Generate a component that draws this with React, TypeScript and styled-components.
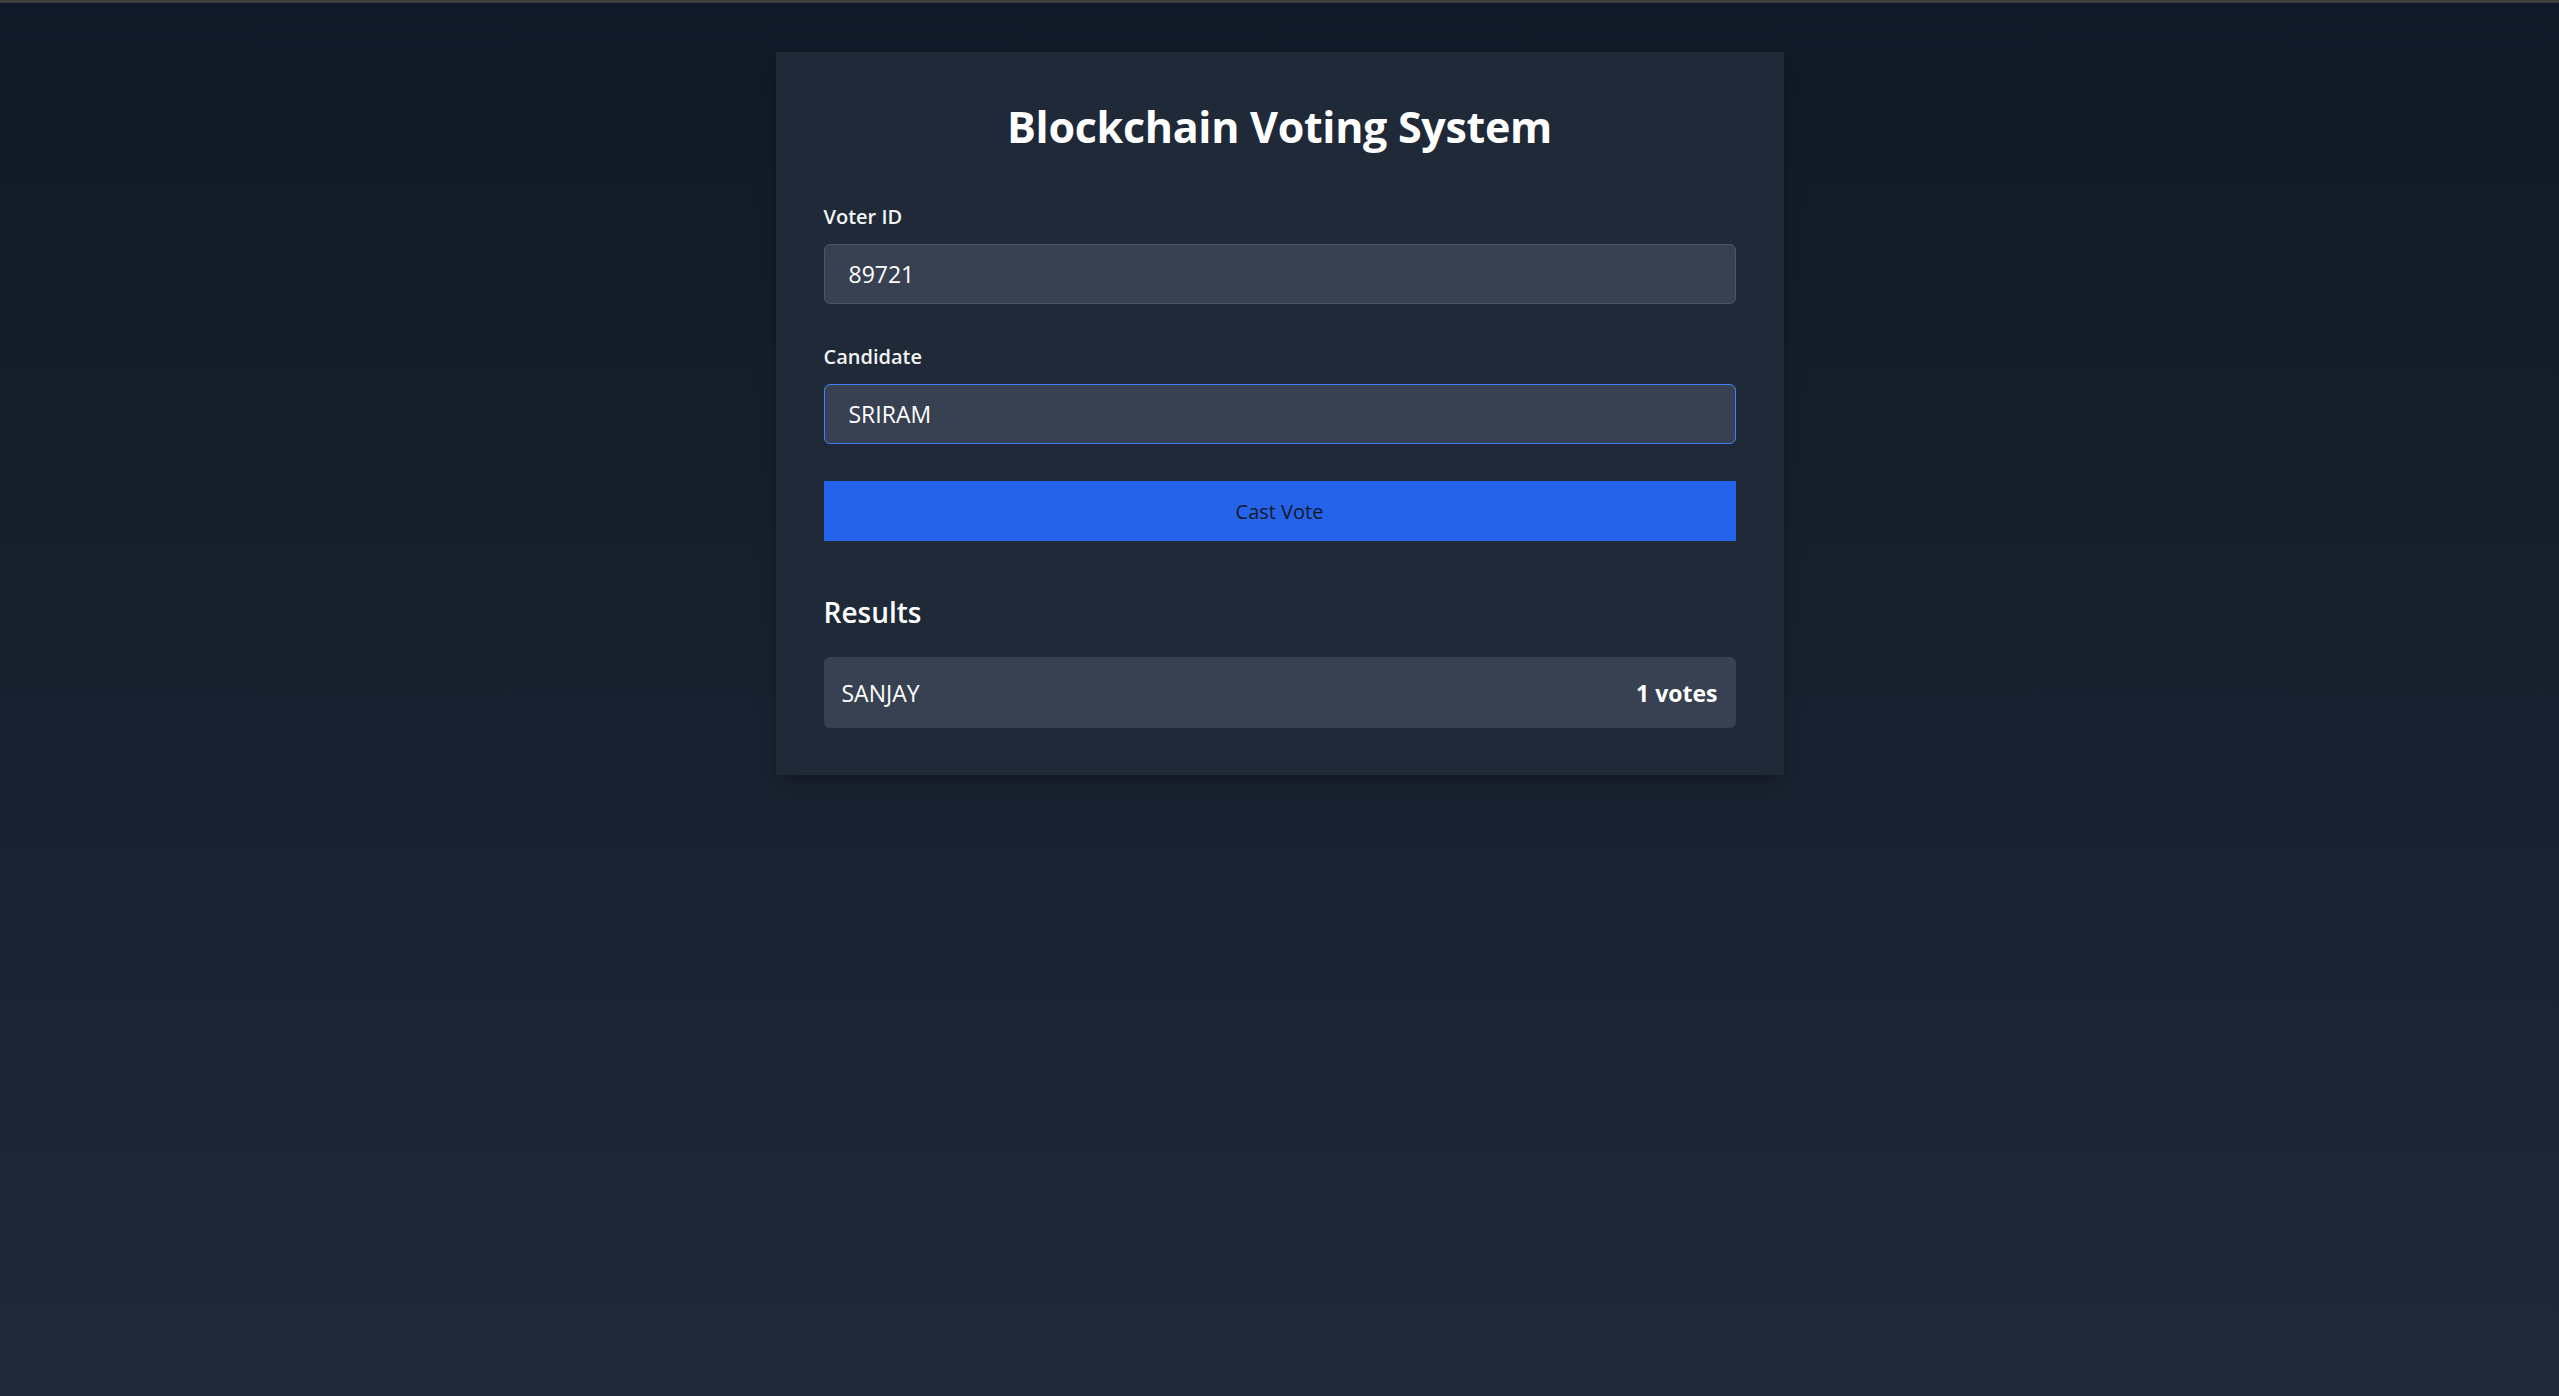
import { useEffect, useRef, useState } from 'react'
import styled, { createGlobalStyle } from 'styled-components'

const GlobalStyle = createGlobalStyle`
    * {
        box-sizing: border-box;
    }
    html, body {
        margin: 0;
        padding: 0;
    }
    body {
        font-family: 'Open Sans', 'Noto Sans', sans-serif;
        background: #111827;
    }
`

const Page = styled.main`
    min-height: 100vh;
    border-top: 3px solid #3f3f3f;
    background: linear-gradient(to bottom, #111827, #1f2937);
    display: flex;
    flex-direction: column;
    align-items: center;
    padding-top: 49px;
`

const Card = styled.section`
    width: 1008px;
    padding: 48px 48px 47px;
    background: #1f2937;
    box-shadow: 0 15px 22px -5px rgba(0, 0, 0, 0.18), 0 6px 9px -6px rgba(0, 0, 0, 0.15);
`

const Title = styled.h1`
    margin: 0 0 48px;
    font-size: 43px;
    line-height: 54px;
    font-weight: 700;
    letter-spacing: -0.3px;
    color: #ffffff;
    text-align: center;
`

const Field = styled.div`
    margin-bottom: 38px;
`

const Label = styled.label`
    display: block;
    margin-bottom: 12px;
    font-size: 20px;
    line-height: 30px;
    font-weight: 600;
    color: #f3f4f6;
`

const Input = styled.input<{ $focused?: boolean }>`
    display: block;
    width: 100%;
    height: 60px;
    padding: 0 24px;
    font-family: inherit;
    font-size: 23px;
    color: #ffffff;
    caret-color: #ffffff;
    background: #374151;
    border: 1.5px solid ${(p) => (p.$focused ? '#3b82f6' : '#4b5563')};
    border-radius: 6px;
    outline: none;
`

const Button = styled.button`
    display: block;
    width: 100%;
    height: 60px;
    margin-top: -1px;
    border: none;
    background: #2563eb;
    color: #111827;
    font-family: inherit;
    font-size: 20px;
    cursor: pointer;
`

const SectionTitle = styled.h2`
    margin: 50px 0 24px;
    font-size: 28px;
    line-height: 42px;
    font-weight: 600;
    color: #ffffff;
`

const ResultRow = styled.div`
    display: flex;
    justify-content: space-between;
    align-items: center;
    height: 71px;
    padding: 0 18px;
    background: #374151;
    border-radius: 6px;
    font-size: 23px;
    color: #ffffff;
`

const Votes = styled.span`
    font-weight: 700;
`

const App = () => {
    const [voterId, setVoterId] = useState('89721')
    const [candidate, setCandidate] = useState('SRIRAM')
    const candidateRef = useRef<HTMLInputElement>(null)

    const results = [{ name: 'SANJAY', votes: 1 }]

    useEffect(() => {
        const el = candidateRef.current
        if (el) {
            el.focus()
            el.setSelectionRange(el.value.length, el.value.length)
        }
    }, [])

    return (
        <>
            <GlobalStyle />
            <Page>
                <Card>
                    <Title>Blockchain Voting System</Title>
                    <Field>
                        <Label htmlFor="voter">Voter ID</Label>
                        <Input id="voter" value={voterId} onChange={(e) => setVoterId(e.target.value)} />
                    </Field>
                    <Field>
                        <Label htmlFor="candidate">Candidate</Label>
                        <Input
                            id="candidate"
                            ref={candidateRef}
                            autoFocus
                            $focused
                            value={candidate}
                            onChange={(e) => setCandidate(e.target.value)}
                        />
                    </Field>
                    <Button>Cast Vote</Button>
                    <SectionTitle>Results</SectionTitle>
                    {results.map((r) => (
                        <ResultRow key={r.name}>
                            <span>{r.name}</span>
                            <Votes>{r.votes} votes</Votes>
                        </ResultRow>
                    ))}
                </Card>
            </Page>
        </>
    )
}

export default App
